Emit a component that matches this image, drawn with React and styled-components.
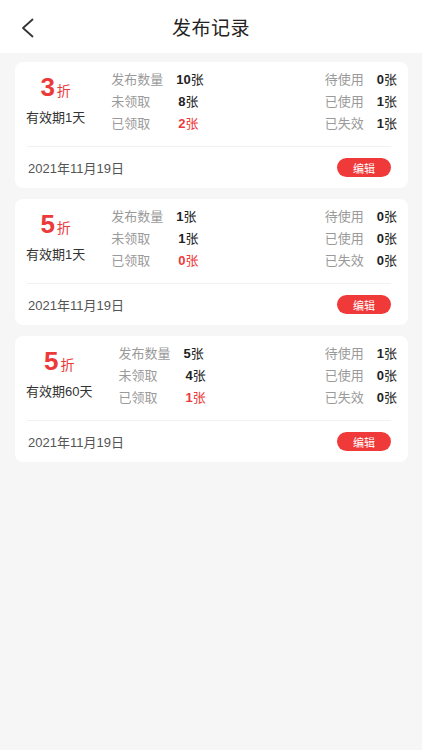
import React from "react";
import styled, { createGlobalStyle } from "styled-components";

const Global = createGlobalStyle`
  html, body { margin: 0; padding: 0; background: #f6f6f6; }
  body { font-family: "Liberation Sans", "Noto Sans CJK SC", sans-serif; }
  * { box-sizing: border-box; }
`;

const Page = styled.div`
  min-height: 750px;
  background: #f6f6f6;
`;

const Header = styled.header`
  height: 53px;
  background: #fff;
  display: flex;
  align-items: center;
  justify-content: center;
  position: relative;
`;

const Back = styled.button`
  position: absolute;
  left: 16px;
  top: 14px;
  width: 24px;
  height: 28px;
  padding: 0;
  border: 0;
  background: transparent;
  display: flex;
  align-items: center;
  justify-content: center;
`;

const Title = styled.h1`
  margin: 0;
  font-size: 19px;
  font-weight: 400;
  color: #222;
  letter-spacing: 0.5px;
  font-family: "Noto Sans CJK SC", sans-serif;
`;

const List = styled.div`
  padding: 9px 14px 0 15px;
  display: flex;
  flex-direction: column;
  gap: 11px;
`;

const Card = styled.div`
  background: #fff;
  border-radius: 8px;
  padding: 5px 11px 0 11px;
  height: 126px;
  display: flex;
  flex-direction: column;
`;

const Top = styled.div`
  display: flex;
  align-items: flex-start;
`;

const Left = styled.div`
  display: flex;
  flex-direction: column;
  align-items: center;
  padding: 5px 0 0 0;
  margin-right: 26px;
`;

const Discount = styled.div`
  color: #ec3a3a;
  display: flex;
  align-items: baseline;
  height: 30px;
`;

const Big = styled.span`
  font-size: 26px;
  font-weight: 700;
  font-family: "Liberation Sans", sans-serif;
`;

const Unit = styled.span`
  font-size: 14px;
  margin-left: 2px;
  font-family: "Noto Sans CJK SC", sans-serif;
`;

const Valid = styled.div`
  font-size: 13px;
  color: #333;
  margin-top: 5px;
  white-space: nowrap;
  font-family: "Liberation Sans", "Noto Sans CJK SC", sans-serif;
`;

const Stats = styled.div`
  display: grid;
  grid-template-columns: max-content max-content;
  column-gap: 13px;
  grid-auto-rows: 22px;
  align-items: center;
`;

const RightStats = styled(Stats)`
  margin-left: auto;
  justify-items: end;
`;

const Label = styled.span`
  font-size: 13px;
  color: #9a9a9a;
  font-family: "Noto Sans CJK SC", sans-serif;
`;

const Value = styled.span`
  font-size: 13px;
  color: ${(p) => (p.$red ? "#ec3a3a" : "#222")};
  padding-left: ${(p) => (p.$shift ? "2px" : "0")};
  font-family: "Liberation Sans", "Noto Sans CJK SC", sans-serif;
  b { font-weight: 700; }
`;

const Divider = styled.div`
  height: 1px;
  background: #f1f1f1;
  margin: 13px 6px 0 1px;
`;

const Footer = styled.div`
  flex: 1;
  display: flex;
  align-items: center;
  justify-content: space-between;
  padding: 0 6px 0 2px;
`;

const Date = styled.span`
  font-size: 13px;
  color: #555;
  font-family: "Liberation Sans", "Noto Sans CJK SC", sans-serif;
`;

const EditBtn = styled.button`
  width: 54px;
  height: 19px;
  border: 0;
  border-radius: 10px;
  background: #f03a3a;
  color: #fff;
  font-size: 11px;
  padding: 0;
  font-family: "Noto Sans CJK SC", sans-serif;
  display: flex;
  align-items: center;
  justify-content: center;
`;

const records = [
  { d: "3", valid: "有效期1天", pub: "10", un: "8", got: "2", wait: "0", used: "1", exp: "1" },
  { d: "5", valid: "有效期1天", pub: "1", un: "1", got: "0", wait: "0", used: "0", exp: "0" },
  { d: "5", valid: "有效期60天", pub: "5", un: "4", got: "1", wait: "1", used: "0", exp: "0" },
];

const V = ({ n, red, shift }) => (
  <Value $red={red} $shift={shift}>
    <b>{n}</b>张
  </Value>
);

export default function App() {
  return (
    <Page>
      <Global />
      <Header>
        <Back aria-label="返回">
          <svg width="14" height="20" viewBox="0 0 14 20">
            <polyline points="11.5,1.5 2,10 11.5,18.5" fill="none" stroke="#333" strokeWidth="1.8" strokeLinecap="round" strokeLinejoin="round" />
          </svg>
        </Back>
        <Title>发布记录</Title>
      </Header>
      <List>
        {records.map((r, i) => (
          <Card key={i}>
            <Top>
              <Left>
                <Discount>
                  <Big>{r.d}</Big>
                  <Unit>折</Unit>
                </Discount>
                <Valid>{r.valid}</Valid>
              </Left>
              <Stats>
                <Label>发布数量</Label>
                <V n={r.pub} />
                <Label>未领取</Label>
                <V n={r.un} shift />
                <Label>已领取</Label>
                <V n={r.got} red shift />
              </Stats>
              <RightStats>
                <Label>待使用</Label>
                <V n={r.wait} />
                <Label>已使用</Label>
                <V n={r.used} />
                <Label>已失效</Label>
                <V n={r.exp} />
              </RightStats>
            </Top>
            <Divider />
            <Footer>
              <Date>2021年11月19日</Date>
              <EditBtn>编辑</EditBtn>
            </Footer>
          </Card>
        ))}
      </List>
    </Page>
  );
}
